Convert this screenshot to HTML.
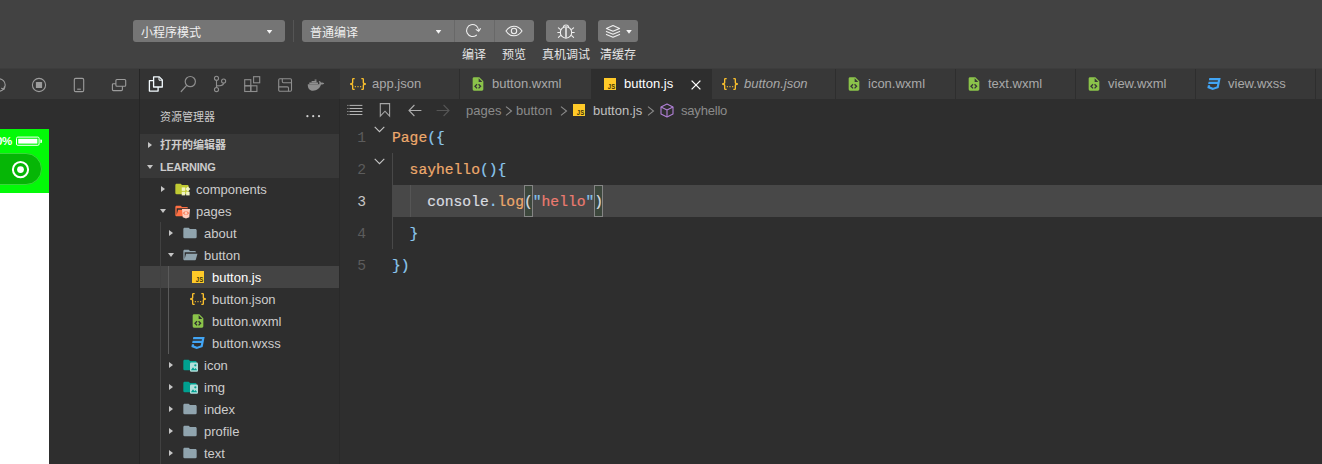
<!DOCTYPE html>
<html lang="zh-CN">
<head>
<meta charset="utf-8">
<title>微信开发者工具</title>
<style>
*{box-sizing:border-box;margin:0;padding:0}
html,body{width:1322px;height:464px;overflow:hidden;background:#2e2e2e}
body{position:relative;font-family:"Liberation Sans","Noto Sans CJK SC",sans-serif;font-size:13px;color:#ccc;-webkit-font-smoothing:antialiased}
.abs{position:absolute}
svg{display:block;overflow:visible}
/* ---------- top toolbar ---------- */
#toolbar{left:0;top:0;width:1322px;height:69px;background:#424242}
#tbline{left:0;top:68px;width:1322px;height:1px;background:#3d3d3d}
.dd{height:22px;top:20px;background:#757575;border-radius:3px;color:#f0f0f0;font-size:12px;line-height:27px;padding-left:8px}
.caret{width:6px;height:4px;background:#f4f4f4;clip-path:polygon(0 0,100% 0,50% 100%)}
.tbtn{height:22px;top:20px;background:#757575}
.tlabel{top:47px;height:16px;line-height:16px;font-size:12px;color:#e6e6e6;text-align:center;white-space:nowrap}
/* ---------- second row ---------- */
#row2{left:0;top:69px;width:1322px;height:30px;background:#383838}
#vdiv{left:139px;top:69px;width:1px;height:395px;background:#262626}
/* ---------- simulator ---------- */
#simgreen{left:0;top:129px;width:49px;height:64px;background:#03fa08}
#simwhite{left:0;top:193px;width:49px;height:271px;background:#fff}
/* ---------- sidebar ---------- */
#sidebar{left:140px;top:99px;width:200px;height:365px;background:#2e2e2e}
.sechead{left:0;width:199px;height:22px;background:#383838;font-size:11px;font-weight:bold;color:#ccc;line-height:22px;padding-left:20px}
.row{left:0;width:199px;height:22px;line-height:22px;font-size:13px;color:#ccc;white-space:nowrap}
.row.sel{background:#444}
.tw{position:absolute;top:8px;width:0;height:0}
.tw.r{border-top:3.5px solid transparent;border-bottom:3.5px solid transparent;border-left:4.8px solid #c5c5c5;top:8px;margin-left:-1px}
.tw.d{border-left:3.5px solid transparent;border-right:3.5px solid transparent;border-top:4.5px solid #c5c5c5;top:9px}
.ico{position:absolute}
.lbl{position:absolute;top:1px}
/* ---------- editor ---------- */
.tab{top:69px;height:30px;line-height:30px;font-size:13px;color:#a9a9a9;background:#383838;border-right:1px solid #2e2e2e;white-space:nowrap}
.tab.act{background:#2e2e2e;color:#fff}
.tab .ti{position:absolute;left:12px;top:9px}
.tab .tt{position:absolute;left:32px;top:0}
#crumbs{left:340px;top:99px;width:982px;height:22px;line-height:23px;font-size:13px;color:#8b8b8b;white-space:nowrap}
.code{font-family:"Liberation Mono",monospace;font-size:14.67px;line-height:32px;height:32px;white-space:pre;left:392px;margin-top:1px;-webkit-text-stroke:.2px}
.ln{font-family:"Liberation Mono",monospace;font-size:14.67px;line-height:32px;height:32px;left:340px;width:26px;text-align:right;color:#5c5c5c;margin-top:1px}
.o{color:#eda96c}.b{color:#8cc8ee}.g{color:#dadde0}.s{color:#ec7b70}.q{color:#85c4ee}
</style>
</head>
<body>
<div class="abs" id="toolbar"></div>
<div class="abs" id="tbline"></div>
<div class="abs" id="row2"></div>
<div class="abs" style="left:140px;top:69px;width:200px;height:30px;background:#333"></div>

<!-- toolbar controls -->
<div class="abs dd" style="left:133px;width:152px">小程序模式<div class="abs caret" style="left:133.500px;top:9.800px"></div></div>
<div class="abs" style="left:293px;top:20px;width:1px;height:22px;background:#555"></div>
<div class="abs dd" style="left:302px;width:152px;border-radius:3px 0 0 3px">普通编译<div class="abs caret" style="left:133.500px;top:9.800px"></div></div>
<div class="abs" style="left:454px;top:20px;width:41px;height:22px;background:#686868"></div><div class="abs tbtn" style="left:455px;width:39px"></div>
<div class="abs tbtn" style="left:495px;width:39px;border-radius:0 3px 3px 0"></div>
<div class="abs tbtn" style="left:546px;width:40px;border-radius:3px"></div>
<div class="abs tbtn" style="left:598px;width:40px;border-radius:3px"><div class="abs caret" style="left:28px;top:9.800px"></div></div>
<div class="abs tlabel" style="left:444px;width:60px">编译</div>
<div class="abs tlabel" style="left:484px;width:60px">预览</div>
<div class="abs tlabel" style="left:536px;width:60px">真机调试</div>
<div class="abs tlabel" style="left:588px;width:60px">清缓存</div>


<!-- toolbar icons -->
<svg class="abs" style="left:463px;top:22px" width="20" height="18" viewBox="0 0 20 18" fill="none" stroke="#efefef" stroke-width="1.1" stroke-linecap="round" stroke-linejoin="round"><path d="M15.6 8.2A6 6 0 1 0 13.4 13.2"/><path d="M13.2 7.6L15.7 9.3L17.4 6.6"/></svg>
<svg class="abs" style="left:504px;top:24px" width="20" height="14" viewBox="0 0 20 14" fill="none" stroke="#efefef" stroke-width="1.1"><path d="M2 7C4.5 3.2 7.2 2.2 10 2.2S15.5 3.2 18 7C15.5 10.8 12.8 11.8 10 11.8S4.500 10.8 2 7Z"/><circle cx="10" cy="7" r="2.7"/></svg>
<svg class="abs" style="left:556px;top:22px" width="20" height="18" viewBox="0 0 20 18" fill="none" stroke="#efefef" stroke-width="1.1" stroke-linecap="round"><ellipse cx="10" cy="10.400" rx="5.700" ry="5.700"/><path d="M7.400 4.800C7.800 2.400 12.200 2.400 12.600 4.800"/><path d="M10 5.200V15.600" stroke-width="1.500" stroke-linecap="butt"/><path d="M4.300 7.400L2.400 5.800M4 10.500H1.800M4.400 13.600L2.400 15.400M15.700 7.400L17.600 5.800M16 10.500H18.200M15.600 13.600L17.600 15.400"/></svg>
<svg class="abs" style="left:604px;top:24px" width="18" height="15" viewBox="0 0 18 15" fill="none" stroke="#efefef" stroke-width="1.1" stroke-linejoin="round" stroke-linecap="round"><path d="M9 1.500L15.600 4.400L9 7.300L2.400 4.400Z"/><path d="M2.400 7.400L9 10.300L15.600 7.400"/><path d="M2.400 10.400L9 13.300L15.600 10.400"/></svg>

<!-- simulator toolbar icons -->
<svg class="abs" style="left:-9px;top:77px" width="16" height="16" viewBox="0 0 16 16" fill="none" stroke="#9c9c9c" stroke-width="1.1" stroke-linecap="round" stroke-linejoin="round"><circle cx="8" cy="8" r="6.2"/><path d="M10.6 11.2L12.9 12.4L13.400 9.6"/></svg>
<svg class="abs" style="left:31px;top:77px" width="16" height="16" viewBox="0 0 16 16"><circle cx="8" cy="8" r="6.6" fill="none" stroke="#9c9c9c" stroke-width="1.1"/><rect x="4.9" y="4.900" width="6.2" height="6.2" rx=".6" fill="#9c9c9c"/></svg>
<svg class="abs" style="left:73px;top:77px" width="12" height="16" viewBox="0 0 12 16" fill="none" stroke="#9c9c9c" stroke-width="1.100"><rect x="1.300" y="1.400" width="9.400" height="13.200" rx="1.400"/><path d="M4.2 12.2H7.8"/></svg>
<svg class="abs" style="left:111px;top:78px" width="16" height="14" viewBox="0 0 16 14" fill="none" stroke="#9c9c9c" stroke-width="1.1" stroke-linejoin="round"><rect x="4.900" y="1.500" width="9.800" height="6.800" rx="1"/><path d="M4.9 5.700H2.400Q1.400 5.700 1.400 6.700V11.600Q1.400 12.600 2.400 12.600H10.400Q11.400 12.600 11.400 11.600V8.300"/></svg>

<!-- activity bar icons -->
<svg class="abs" style="left:147px;top:75px" width="18" height="18" viewBox="0 0 18 18" fill="none" stroke="#f4fbff" stroke-width="1.3" stroke-linejoin="round"><path d="M6.6 1.900H12.300L15.300 4.900V12H6.600Z"/><path d="M12 2V5.200H15.200" stroke-width="1"/><path d="M6.600 5.600H2.400V16.100H11.100V12"/></svg>
<svg class="abs" style="left:179px;top:75px" width="18" height="18" viewBox="0 0 18 18" fill="none" stroke="#8e8e8e" stroke-width="1.2" stroke-linecap="round"><circle cx="11.300" cy="6.600" r="5.100"/><path d="M7.700 10.400L2.200 16.500"/></svg>
<svg class="abs" style="left:211px;top:75px" width="18" height="18" viewBox="0 0 18 18" fill="none" stroke="#8e8e8e" stroke-width="1.100"><circle cx="5.500" cy="3.300" r="2.050"/><circle cx="5.500" cy="14.600" r="2.050"/><circle cx="12.600" cy="6.100" r="2.050"/><path d="M5.500 5.400V12.500"/><path d="M12.600 8.200C12.600 10.600 9.500 10.700 5.500 10.900"/></svg>
<svg class="abs" style="left:243px;top:75px" width="18" height="18" viewBox="0 0 18 18" fill="none" stroke="#8e8e8e" stroke-width="1.100"><rect x="1.700" y="4.700" width="6.100" height="6.100"/><rect x="1.700" y="10.800" width="6.100" height="5.700"/><rect x="7.800" y="10.800" width="6.100" height="5.700"/><rect x="10.600" y="1.700" width="6.100" height="6.100"/></svg>
<svg class="abs" style="left:277px;top:76px" width="16" height="16" viewBox="0 0 16 16" fill="none" stroke="#8e8e8e" stroke-width="1.100" stroke-linejoin="round"><rect x="1.700" y="2.700" width="12.800" height="12.600" rx="1.200"/><path d="M5.300 2.700V5.500Q5.300 6.700 6.500 6.700H14.500"/><path d="M1.700 10.900H10.300Q11.500 10.900 11.500 12.100V15.300"/></svg>
<svg class="abs" style="left:307px;top:77.500px" width="18" height="14" viewBox="0 0 18 14" fill="#8e8e8e"><path d="M.8 6.300H12.300C12.500 5 12.400 4 11.700 3.100C12.600 2.700 13.800 3.600 14 4.700C15 4.400 16.200 4.500 17.200 5.200C16.600 6.300 15.300 6.700 14 6.600C12.700 10.600 9.800 12.800 6 12.800C2.600 12.800 .6 10.600 .8 6.300Z"/><path d="M2.300 4.500H11V6H2.300ZM4.600 3H9.500V4.300H4.600ZM7.600 1.500H9.500V2.800H7.600Z"/></svg>

<!-- simulator -->
<div class="abs" id="simgreen"></div>
<div class="abs" id="simwhite"></div>
<div class="abs" style="left:-4px;top:134px;font-size:11.500px;line-height:14px;font-weight:bold;color:#fff;letter-spacing:-.3px">0%</div>
<svg class="abs" style="left:15px;top:135px" width="28" height="12" viewBox="0 0 28 12"><rect x="1.500" y="2.100" width="22.600" height="8.200" rx="1.300" fill="none" stroke="#fff" stroke-width="1"/><rect x="3.200" y="3.800" width="19.200" height="4.800" fill="#fff"/><path d="M25.400 4.400h.7q.8 0 .8 .8v2q0 .8-.8 .8h-.7z" fill="#fff"/></svg>
<div class="abs" style="left:-20px;top:153px;width:62px;height:32px;border-radius:16px;background:#06b606;border:.6px solid #3ad63a"></div>
<svg class="abs" style="left:10px;top:158px" width="22" height="22" viewBox="0 0 22 22"><circle cx="10.500" cy="11.600" r="7.600" fill="none" stroke="#fff" stroke-width="2"/><circle cx="10.500" cy="11.600" r="3.400" fill="#fff"/></svg>
<div class="abs" id="vdiv"></div>

<!-- sidebar -->
<div class="abs" id="sidebar">
  <div class="abs" style="left:20px;top:7px;font-size:11px;line-height:22px;color:#ccc">资源管理器</div>
  <svg class="abs" style="left:165px;top:15px" width="16" height="4" viewBox="0 0 16 4" fill="#d0d0d0"><circle cx="2.400" cy="2.200" r="1.100"/><circle cx="8.200" cy="2.200" r="1.100"/><circle cx="14" cy="2.200" r="1.100"/></svg>
  <div class="abs sechead" style="top:35px"><i class="tw r" style="left:9px"></i>打开的编辑器</div>
  <div class="abs sechead" style="top:57px"><i class="tw d" style="left:7px"></i><span style="letter-spacing:-.25px">LEARNING</span></div>
  <div class="abs row" style="top:79px"><i class="tw r" style="left:22px"></i><svg class="ico" style="left:34px;top:3px" width="16" height="16" viewBox="0 0 24 24"><path fill="#c0ca33" d="M10 4H4c-1.110 0-2 .89-2 2v12a2 2 0 0 0 2 2h16a2 2 0 0 0 2-2V8c0-1.110-.9-2-2-2h-8l-2-2z"/><g fill="#f0f4c3"><rect x="11.600" y="9.600" width="5.200" height="5.200"/><rect x="11.600" y="16.200" width="5.200" height="5.400"/><rect x="18.200" y="16.200" width="5.200" height="5.400"/><path d="M20.800 8.400l3.700 3.700-3.700 3.700-3.700-3.700z"/></g></svg><span class="lbl" style="left:56px">components</span></div>
  <div class="abs row" style="top:101px"><i class="tw d" style="left:20px"></i><svg class="ico" style="left:34px;top:3px" width="16" height="16" viewBox="0 0 24 24"><path fill="#ff7043" d="M19 20H4c-1.110 0-2-.9-2-2V6c0-1.110.89-2 2-2h6l2 2h7a2 2 0 0 1 2 2H4v10l2.140-8h17.070l-2.280 8.500c-.23.870-1.010 1.500-1.930 1.500z"/><path fill="#ffccbc" d="M12 9h12l-1.100 12.400-4.900 1.700-4.900-1.700z"/><path fill="none" stroke="#f4511e" stroke-width="1.400" d="M16.700 12.600l-2.400 2.500 2.400 2.500M19.300 12.600l2.400 2.500-2.400 2.500"/></svg><span class="lbl" style="left:56px">pages</span></div>
  <div class="abs row" style="top:123px"><i class="tw r" style="left:30px"></i><svg class="ico" style="left:42px;top:3px" width="16" height="16" viewBox="0 0 24 24"><path fill="#90a4ae" d="M10 4H4c-1.110 0-2 .89-2 2v12a2 2 0 0 0 2 2h16a2 2 0 0 0 2-2V8c0-1.110-.9-2-2-2h-8l-2-2z"/></svg><span class="lbl" style="left:64px">about</span></div>
  <div class="abs row" style="top:145px"><i class="tw d" style="left:28px"></i><svg class="ico" style="left:42px;top:3px" width="16" height="16" viewBox="0 0 24 24"><path fill="#90a4ae" d="M19 20H4c-1.110 0-2-.9-2-2V6c0-1.110.89-2 2-2h6l2 2h7a2 2 0 0 1 2 2H4v10l2.140-8h17.070l-2.280 8.500c-.23.870-1.010 1.500-1.930 1.500z"/></svg><span class="lbl" style="left:64px">button</span></div>
  <div class="abs row sel" style="top:167px"><svg class="ico" style="left:50px;top:3px" width="16" height="16" viewBox="0 0 24 24"><rect x="3" y="3" width="18" height="18" fill="#ffca28"/><text x="8.800" y="19.700" textLength="10.800" lengthAdjust="spacingAndGlyphs" font-family="Liberation Sans,sans-serif" font-weight="bold" font-size="11.400" fill="#3d3205">JS</text></svg><span class="lbl" style="left:72px;color:#fff">button.js</span></div>
  <div class="abs row" style="top:189px"><svg class="ico" style="left:50px;top:3px" width="16" height="16" viewBox="0 0 24 24"><path fill="#fbc02d" d="M5 3h2v2H5v5a2 2 0 0 1-2 2 2 2 0 0 1 2 2v5h2v2H5c-1.070-.27-2-.9-2-2v-4a2 2 0 0 0-2-2H0v-2h1a2 2 0 0 0 2-2V5a2 2 0 0 1 2-2m14 0a2 2 0 0 1 2 2v4a2 2 0 0 0 2 2h1v2h-1a2 2 0 0 0-2 2v4a2 2 0 0 1-2 2h-2v-2h2v-5a2 2 0 0 1 2-2 2 2 0 0 1-2-2V5h-2V3h2m-7 12a1 1 0 0 1 1 1 1 1 0 0 1-1 1 1 1 0 0 1-1-1 1 1 0 0 1 1-1m-4 0a1 1 0 0 1 1 1 1 1 0 0 1-1 1 1 1 0 0 1-1-1 1 1 0 0 1 1-1m8 0a1 1 0 0 1 1 1 1 1 0 0 1-1 1 1 1 0 0 1-1-1 1 1 0 0 1 1-1z"/></svg><span class="lbl" style="left:72px">button.json</span></div>
  <div class="abs row" style="top:211px"><svg class="ico" style="left:50px;top:3px" width="16" height="16" viewBox="0 0 24 24"><path fill="#8bc34a" d="M13 9h5.500L13 3.500V9M6 2h8l6 6v12a2 2 0 0 1-2 2H6a2 2 0 0 1-2-2V4c0-1.110.89-2 2-2m.12 13.500l3.740 3.740 1.420-1.410-2.330-2.330 2.330-2.330-1.420-1.410-3.740 3.740m11.160 0l-3.740-3.740-1.420 1.410 2.330 2.330-2.330 2.330 1.420 1.410 3.740-3.740z"/></svg><span class="lbl" style="left:72px">button.wxml</span></div>
  <div class="abs row" style="top:233px"><svg class="ico" style="left:50px;top:3px" width="16" height="16" viewBox="0 0 24 24"><path fill="#42a5f5" d="M5 3l-.65 3.340h13.590L17.500 8.500H3.920l-.66 3.330h13.590l-.76 3.810-5.480 1.810-4.750-1.810.33-1.640H2.850l-.79 4 7.850 3 9.050-3 1.200-6.030.24-1.210L21.940 3H5z"/></svg><span class="lbl" style="left:72px">button.wxss</span></div>
  <div class="abs row" style="top:255px"><i class="tw r" style="left:30px"></i><svg class="ico" style="left:42px;top:3px" width="16" height="16" viewBox="0 0 24 24"><path fill="#00a090" d="M10 4H4c-1.110 0-2 .89-2 2v12a2 2 0 0 0 2 2h16a2 2 0 0 0 2-2V8c0-1.110-.9-2-2-2h-8l-2-2z"/><rect x="12" y="8.400" width="12" height="13.800" rx="1.800" fill="#b2dfdb"/><path fill="#00a090" d="M13.300 19.800l3.200-4.300 2.200 2.800 1.600-1.900 2.600 3.400z"/><circle cx="20" cy="12.400" r="1.700" fill="#00a090"/></svg><span class="lbl" style="left:64px">icon</span></div>
  <div class="abs row" style="top:277px"><i class="tw r" style="left:30px"></i><svg class="ico" style="left:42px;top:3px" width="16" height="16" viewBox="0 0 24 24"><path fill="#00a090" d="M10 4H4c-1.110 0-2 .89-2 2v12a2 2 0 0 0 2 2h16a2 2 0 0 0 2-2V8c0-1.110-.9-2-2-2h-8l-2-2z"/><rect x="12" y="8.400" width="12" height="13.800" rx="1.800" fill="#b2dfdb"/><path fill="#00a090" d="M13.300 19.800l3.200-4.300 2.200 2.800 1.600-1.900 2.600 3.400z"/><circle cx="20" cy="12.400" r="1.700" fill="#00a090"/></svg><span class="lbl" style="left:64px">img</span></div>
  <div class="abs row" style="top:299px"><i class="tw r" style="left:30px"></i><svg class="ico" style="left:42px;top:3px" width="16" height="16" viewBox="0 0 24 24"><path fill="#90a4ae" d="M10 4H4c-1.110 0-2 .89-2 2v12a2 2 0 0 0 2 2h16a2 2 0 0 0 2-2V8c0-1.110-.9-2-2-2h-8l-2-2z"/></svg><span class="lbl" style="left:64px">index</span></div>
  <div class="abs row" style="top:321px"><i class="tw r" style="left:30px"></i><svg class="ico" style="left:42px;top:3px" width="16" height="16" viewBox="0 0 24 24"><path fill="#90a4ae" d="M10 4H4c-1.110 0-2 .89-2 2v12a2 2 0 0 0 2 2h16a2 2 0 0 0 2-2V8c0-1.110-.9-2-2-2h-8l-2-2z"/></svg><span class="lbl" style="left:64px">profile</span></div>
  <div class="abs row" style="top:343px"><i class="tw r" style="left:30px"></i><svg class="ico" style="left:42px;top:3px" width="16" height="16" viewBox="0 0 24 24"><path fill="#90a4ae" d="M10 4H4c-1.110 0-2 .89-2 2v12a2 2 0 0 0 2 2h16a2 2 0 0 0 2-2V8c0-1.110-.9-2-2-2h-8l-2-2z"/></svg><span class="lbl" style="left:64px">text</span></div>
  <div class="abs" style="left:20px;top:123px;width:1px;height:242px;background:#414141"></div>
  <div class="abs" style="left:28px;top:167px;width:1px;height:88px;background:#5a5a5a"></div>
</div>

<div class="abs" style="left:339px;top:99px;width:1px;height:365px;background:#292929"></div>
<!-- editor tabs -->
<div class="abs tab" style="left:340px;width:120px"><svg class="ico" style="left:10px;top:7px" width="16" height="16" viewBox="0 0 24 24"><path fill="#fbc02d" d="M5 3h2v2H5v5a2 2 0 0 1-2 2 2 2 0 0 1 2 2v5h2v2H5c-1.070-.27-2-.9-2-2v-4a2 2 0 0 0-2-2H0v-2h1a2 2 0 0 0 2-2V5a2 2 0 0 1 2-2m14 0a2 2 0 0 1 2 2v4a2 2 0 0 0 2 2h1v2h-1a2 2 0 0 0-2 2v4a2 2 0 0 1-2 2h-2v-2h2v-5a2 2 0 0 1 2-2 2 2 0 0 1-2-2V5h-2V3h2m-7 12a1 1 0 0 1 1 1 1 1 0 0 1-1 1 1 1 0 0 1-1-1 1 1 0 0 1 1-1m-4 0a1 1 0 0 1 1 1 1 1 0 0 1-1 1 1 1 0 0 1-1-1 1 1 0 0 1 1-1m8 0a1 1 0 0 1 1 1 1 1 0 0 1-1 1 1 1 0 0 1-1-1 1 1 0 0 1 1-1z"/></svg><span class="tt">app.json</span></div>
<div class="abs tab" style="left:460px;width:132px"><svg class="ico" style="left:10px;top:7px" width="16" height="16" viewBox="0 0 24 24"><path fill="#8bc34a" d="M13 9h5.500L13 3.500V9M6 2h8l6 6v12a2 2 0 0 1-2 2H6a2 2 0 0 1-2-2V4c0-1.110.89-2 2-2m.12 13.500l3.740 3.740 1.420-1.410-2.330-2.330 2.330-2.330-1.420-1.410-3.740 3.740m11.160 0l-3.740-3.740-1.420 1.410 2.330 2.330-2.330 2.330 1.420 1.410 3.740-3.740z"/></svg><span class="tt">button.wxml</span></div>
<div class="abs tab act" style="left:592px;width:120px"><svg class="ico" style="left:10px;top:7px" width="16" height="16" viewBox="0 0 24 24"><rect x="3" y="3" width="18" height="18" fill="#ffca28"/><text x="8.800" y="19.700" textLength="10.800" lengthAdjust="spacingAndGlyphs" font-family="Liberation Sans,sans-serif" font-weight="bold" font-size="11.400" fill="#3d3205">JS</text></svg><span class="tt">button.js</span><svg class="ico" style="left:98.500px;top:10.500px" width="10" height="10" viewBox="0 0 10 10" stroke="#fff" stroke-width="1.300" fill="none"><path d="M.6 .6L9.400 9.400M9.400 .6L.6 9.400"/></svg></div>
<div class="abs tab" style="left:712px;width:124px"><svg class="ico" style="left:10px;top:7px" width="16" height="16" viewBox="0 0 24 24"><path fill="#fbc02d" d="M5 3h2v2H5v5a2 2 0 0 1-2 2 2 2 0 0 1 2 2v5h2v2H5c-1.070-.27-2-.9-2-2v-4a2 2 0 0 0-2-2H0v-2h1a2 2 0 0 0 2-2V5a2 2 0 0 1 2-2m14 0a2 2 0 0 1 2 2v4a2 2 0 0 0 2 2h1v2h-1a2 2 0 0 0-2 2v4a2 2 0 0 1-2 2h-2v-2h2v-5a2 2 0 0 1 2-2 2 2 0 0 1-2-2V5h-2V3h2m-7 12a1 1 0 0 1 1 1 1 1 0 0 1-1 1 1 1 0 0 1-1-1 1 1 0 0 1 1-1m-4 0a1 1 0 0 1 1 1 1 1 0 0 1-1 1 1 1 0 0 1-1-1 1 1 0 0 1 1-1m8 0a1 1 0 0 1 1 1 1 1 0 0 1-1 1 1 1 0 0 1-1-1 1 1 0 0 1 1-1z"/></svg><span class="tt" style="font-style:italic">button.json</span></div>
<div class="abs tab" style="left:836px;width:120px"><svg class="ico" style="left:10px;top:7px" width="16" height="16" viewBox="0 0 24 24"><path fill="#8bc34a" d="M13 9h5.500L13 3.500V9M6 2h8l6 6v12a2 2 0 0 1-2 2H6a2 2 0 0 1-2-2V4c0-1.110.89-2 2-2m.12 13.500l3.740 3.740 1.420-1.410-2.330-2.330 2.330-2.330-1.420-1.410-3.740 3.740m11.160 0l-3.740-3.740-1.420 1.410 2.330 2.330-2.330 2.330 1.420 1.410 3.740-3.740z"/></svg><span class="tt">icon.wxml</span></div>
<div class="abs tab" style="left:956px;width:120px"><svg class="ico" style="left:10px;top:7px" width="16" height="16" viewBox="0 0 24 24"><path fill="#8bc34a" d="M13 9h5.500L13 3.500V9M6 2h8l6 6v12a2 2 0 0 1-2 2H6a2 2 0 0 1-2-2V4c0-1.110.89-2 2-2m.12 13.500l3.740 3.740 1.420-1.410-2.330-2.330 2.330-2.330-1.420-1.410-3.740 3.740m11.160 0l-3.740-3.740-1.420 1.410 2.330 2.330-2.330 2.330 1.420 1.410 3.740-3.740z"/></svg><span class="tt">text.wxml</span></div>
<div class="abs tab" style="left:1076px;width:120px"><svg class="ico" style="left:10px;top:7px" width="16" height="16" viewBox="0 0 24 24"><path fill="#8bc34a" d="M13 9h5.500L13 3.500V9M6 2h8l6 6v12a2 2 0 0 1-2 2H6a2 2 0 0 1-2-2V4c0-1.110.89-2 2-2m.12 13.500l3.740 3.740 1.420-1.410-2.330-2.330 2.330-2.330-1.420-1.410-3.740 3.740m11.160 0l-3.740-3.740-1.420 1.410 2.330 2.330-2.330 2.330 1.420 1.410 3.740-3.740z"/></svg><span class="tt">view.wxml</span></div>
<div class="abs tab" style="left:1196px;width:120px"><svg class="ico" style="left:10px;top:7px" width="16" height="16" viewBox="0 0 24 24"><path fill="#42a5f5" d="M5 3l-.65 3.340h13.590L17.500 8.500H3.920l-.66 3.330h13.590l-.76 3.810-5.480 1.810-4.750-1.810.33-1.640H2.850l-.79 4 7.850 3 9.050-3 1.200-6.030.24-1.210L21.940 3H5z"/></svg><span class="tt">view.wxss</span></div>

<!-- breadcrumbs -->
<div class="abs" id="crumbs">

  <svg class="ico" style="left:7px;top:5px" width="16" height="12" viewBox="0 0 16 12" fill="none" stroke="#b4b4b4" stroke-width="1"><path d="M.4 1.400H1.400M2.500 1.400H15.400M.4 4.500H1.400M2.500 4.500H15.400M.4 7.500H1.400M2.500 7.500H15.400M.4 10.500H1.400M2.500 10.500H15.400"/></svg>
  <svg class="ico" style="left:39px;top:3px" width="12" height="16" viewBox="0 0 12 16" fill="none" stroke="#a6a6a6" stroke-width="1.100"><path d="M1.300 1.600H10.600V14.200L6 9.200L1.300 14.200Z"/></svg>
  <svg class="ico" style="left:68px;top:5px" width="14" height="12" viewBox="0 0 14 12" fill="none" stroke="#adadad" stroke-width="1.100"><path d="M13.400 6.500H1.200M6.400 1L1 6.500L6.400 12"/></svg>
  <svg class="ico" style="left:96px;top:5px" width="14" height="12" viewBox="0 0 14 12" fill="none" stroke="#555" stroke-width="1.100"><path d="M.6 6.500H12.800M7.600 1L13 6.500L7.600 12"/></svg>
  <svg class="ico" style="left:165px;top:7px" width="8" height="10" viewBox="0 0 8 10" fill="none" stroke="#8b8b8b" stroke-width="1.100"><path d="M1 .6L6.500 5L1 9.400"/></svg>
  <svg class="ico" style="left:220px;top:7px" width="8" height="10" viewBox="0 0 8 10" fill="none" stroke="#8b8b8b" stroke-width="1.100"><path d="M1 .6L6.500 5L1 9.400"/></svg>
  <svg class="ico" style="left:307px;top:7px" width="8" height="10" viewBox="0 0 8 10" fill="none" stroke="#8b8b8b" stroke-width="1.100"><path d="M1 .6L6.500 5L1 9.400"/></svg>
  <svg class="ico" style="left:320px;top:4px" width="14" height="15" viewBox="0 0 14 15" fill="none" stroke="#b180d7" stroke-width="1.100" stroke-linejoin="round"><path d="M7 1L13 4V11L7 14L1 11V4Z"/><path d="M1 4L7 7L13 4M7 7V14"/></svg>
  <svg class="ico" style="left:231px;top:3px" width="16" height="16" viewBox="0 0 24 24"><rect x="3" y="3" width="18" height="18" fill="#ffca28"/><text x="8.800" y="19.700" textLength="10.800" lengthAdjust="spacingAndGlyphs" font-family="Liberation Sans,sans-serif" font-weight="bold" font-size="11.400" fill="#3d3205">JS</text></svg>
  <span class="abs" style="left:126px">pages</span>
  <span class="abs" style="left:176px">button</span>
  <span class="abs" style="left:253px;color:#c0c0c0">button.js</span>
  <span class="abs" style="left:341px;letter-spacing:-.2px">sayhello</span>
</div>

<!-- code -->
<div class="abs" style="left:392px;top:185px;width:930px;height:32px;background:#484848"></div>
<div class="abs" style="left:392px;top:153px;width:1px;height:96px;background:#484848"></div>
<div class="abs" style="left:410px;top:185px;width:1px;height:32px;background:#555"></div>

<svg class="abs" style="left:374px;top:126px" width="11" height="7" viewBox="0 0 11 7" fill="none" stroke="#c5c5c5" stroke-width="1.100"><path d="M.7 .8L5.500 5.600L10.300 .8"/></svg>
<svg class="abs" style="left:374px;top:158px" width="11" height="7" viewBox="0 0 11 7" fill="none" stroke="#c5c5c5" stroke-width="1.100"><path d="M.7 .8L5.500 5.600L10.300 .8"/></svg>
<div class="abs" style="left:524px;top:185px;width:9px;height:32px;background:#3c473c;border:1px solid #858585"></div>
<div class="abs" style="left:594px;top:185px;width:9px;height:32px;background:#3c473c;border:1px solid #858585"></div>
<div class="abs ln" style="top:121px">1</div>
<div class="abs ln" style="top:153px">2</div>
<div class="abs ln" style="top:185px;color:#c6c6c6">3</div>
<div class="abs ln" style="top:217px">4</div>
<div class="abs ln" style="top:249px">5</div>
<div class="abs code" style="top:121px"><span class="o">Page</span><span class="b">({</span></div>
<div class="abs code" style="top:153px">  <span class="o">sayhello</span><span class="b">(){</span></div>
<div class="abs code" style="top:185px">    <span class="g">console</span><span class="b">.</span><span class="o">log</span><span class="g">(</span><span class="q">"</span><span class="s">hello</span><span class="q">"</span><span class="g">)</span></div>
<div class="abs code" style="top:217px">  <span class="b">}</span></div>
<div class="abs code" style="top:249px"><span class="b">})</span></div>
</body>
</html>
